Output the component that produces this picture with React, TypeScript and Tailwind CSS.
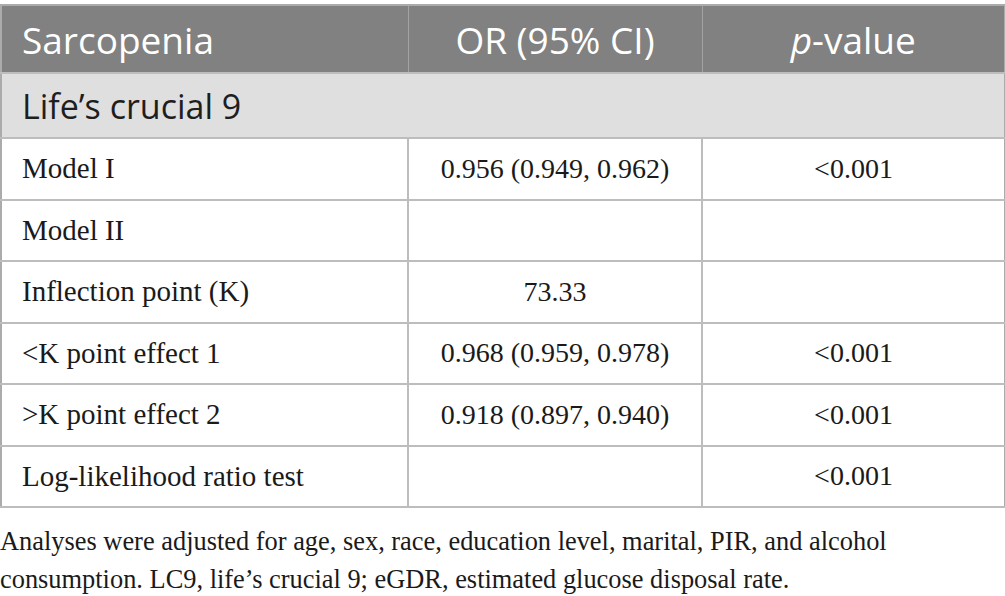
import React from "react";

const rows: [string, string, string][] = [
  ["Model I", "0.956 (0.949, 0.962)", "<0.001"],
  ["Model II", "", ""],
  ["Inflection point (K)", "73.33", ""],
  ["<K point effect 1", "0.968 (0.959, 0.978)", "<0.001"],
  [">K point effect 2", "0.918 (0.897, 0.940)", "<0.001"],
  ["Log-likelihood ratio test", "", "<0.001"],
];

export default function App() {
  return (
    <div className="bg-white w-[1005px] h-[596px] overflow-hidden pt-[4px] font-['Liberation_Serif',serif] text-[#1a1a1a]">
      <table className="border-collapse table-fixed w-[1004px] border-2 border-[#ababab]">
        <colgroup>
          <col className="w-[407px]" />
          <col className="w-[294px]" />
          <col className="w-[303px]" />
        </colgroup>
        <thead>
          <tr className="h-[68px] bg-[#808180] text-white font-['Open_Sans',sans-serif] text-[37px] leading-none">
            <th className="text-left font-normal pl-[20px] border-r border-[#a3a3a3]">Sarcopenia</th>
            <th className="text-center font-normal border-r border-[#a3a3a3]">OR (95% CI)</th>
            <th className="text-center font-normal">
              <span className="italic">p</span>-value
            </th>
          </tr>
        </thead>
        <tbody>
          <tr className="h-[65px] bg-[#e0dfe0] border-t-2 border-b-2 border-[#bdbdbd]">
            <td colSpan={3} className="pl-[20px] font-['Open_Sans',sans-serif] text-[34px] text-[#1e1e1e] leading-none">
              Life’s crucial 9
            </td>
          </tr>
          {rows.map((r, i) => (
            <tr key={i} className="h-[61.5px] border-b-2 border-[#bdbdbd] leading-none">
              <td className="pl-[20px] text-[29px] border-r-2 border-[#bdbdbd]">{r[0]}</td>
              <td className="text-center text-[28px] border-r-2 border-[#bdbdbd]">{r[1]}</td>
              <td className="text-center text-[28px]">{r[2]}</td>
            </tr>
          ))}
        </tbody>
      </table>
      <div className="mt-[14px] text-[26.4px] leading-[38px] font-['Liberation_Serif',serif]">
        <p>Analyses were adjusted for age, sex, race, education level, marital, PIR, and alcohol</p>
        <p>consumption. LC9, life’s crucial 9; eGDR, estimated glucose disposal rate.</p>
      </div>
    </div>
  );
}
